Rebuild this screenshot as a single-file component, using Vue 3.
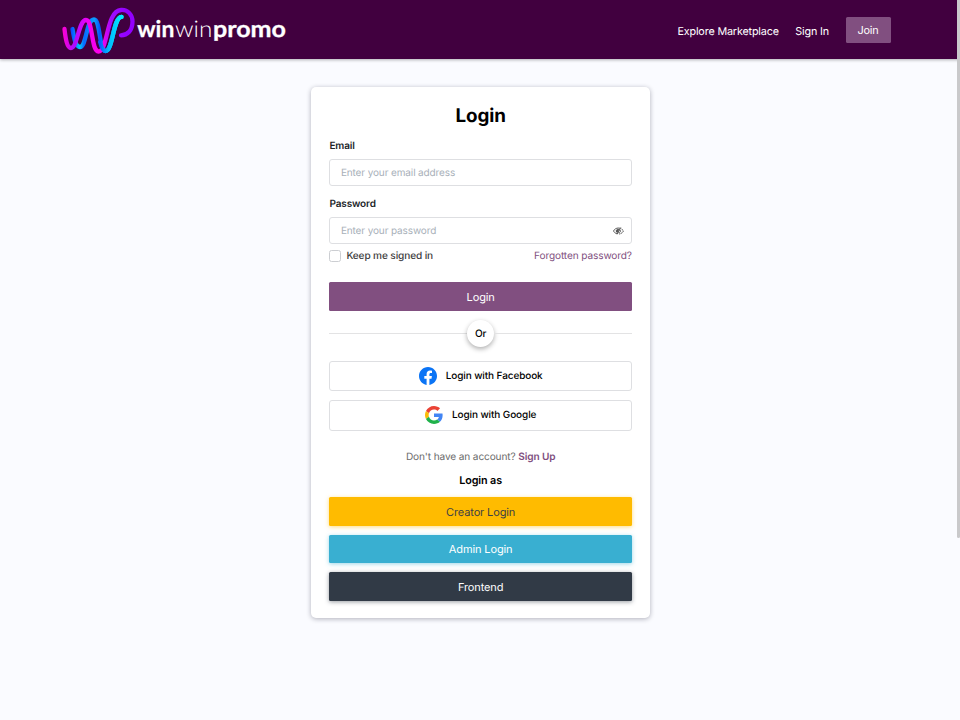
<script setup>
import { ref } from 'vue'

const email = ref('')
const password = ref('')
const keep = ref(false)
const roles = [
  { label: 'Creator Login', tone: 'creator' },
  { label: 'Admin Login', tone: 'admin' },
  { label: 'Frontend', tone: 'frontend' },
]
</script>

<template>
  <div class="page">
    <header class="header">
      <svg class="logo" viewBox="0 0 226 50" role="img" aria-label="winwinpromo">
        <defs>
          <linearGradient id="pink" gradientUnits="userSpaceOnUse" x1="2" y1="0" x2="66" y2="0">
            <stop offset="0" stop-color="#ff00d4" />
            <stop offset=".18" stop-color="#a80cff" />
            <stop offset=".38" stop-color="#f000f5" />
            <stop offset=".6" stop-color="#ff00e6" />
            <stop offset=".75" stop-color="#a00cff" />
            <stop offset="1" stop-color="#9200ff" />
          </linearGradient>
          <linearGradient id="blue" gradientUnits="userSpaceOnUse" x1="10" y1="0" x2="62" y2="0">
            <stop offset="0" stop-color="#0848ff" />
            <stop offset=".17" stop-color="#00c8ff" />
            <stop offset=".25" stop-color="#0868ff" />
            <stop offset=".45" stop-color="#0ba0ff" />
            <stop offset=".55" stop-color="#0757ff" />
            <stop offset=".72" stop-color="#00b9ff" />
            <stop offset="1" stop-color="#00f0ff" />
          </linearGradient>
        </defs>
        <g fill="none" stroke-width="4.300" stroke-linecap="round">
          <path stroke="url(#blue)" d="M11.500 24 C12.500 30 14 42 19 42 C25.500 42 25 14.500 33 14.500 C39.500 14.500 38 46 44.500 46 C52 46 52 12.300 60.500 11.800" />
          <path stroke="url(#pink)" d="M3.500 24 C4.500 33 6 43 10 43 C16.500 43 17.500 15 25 15 C32 15 30 46 37.500 46.500 C47 46.500 45 5.800 60 5 C67 4.500 71.500 10 71.500 16.500 C71.500 25.500 66.500 30.300 60 30.300" />
          <path stroke="url(#blue)" d="M39.200 37 C40.500 42.500 42 46 44.500 46 C52 46 52 12.300 60.500 11.800" />
        </g>
        <g fill="#fff" class="wordmark">
          <text x="76.300" y="32.300" textLength="37" lengthAdjust="spacingAndGlyphs" class="heavy">win</text>
          <text x="114" y="32.300" textLength="37.300" lengthAdjust="spacingAndGlyphs" class="thin">win</text>
          <text x="152" y="32.300" textLength="73" lengthAdjust="spacingAndGlyphs" class="heavy">promo</text>
        </g>
      </svg>
      <nav class="nav">
        <a>Explore Marketplace</a>
        <a>Sign In</a>
        <button class="join">Join</button>
      </nav>
    </header>

    <main class="card">
      <h1>Login</h1>
      <label class="label">Email</label>
      <div class="field"><input v-model="email" type="text" placeholder="Enter your email address" /></div>
      <label class="label second">Password</label>
      <div class="field">
        <input v-model="password" type="password" placeholder="Enter your password" />
        <svg class="eye" viewBox="0 0 22 16" fill="none" stroke="#444" stroke-width="1.700">
          <path d="M8 13.500 C4.500 12.700 2.300 10.500 1 8 C3 4 6.500 2 11 2 L14 2.400" />
          <path d="M17 4 C18.800 5 20.200 6.300 21 8 C19.300 11.500 16.300 13.600 12 14" stroke-dasharray="4 1" />
          <path d="M8.500 14.500 L15.500 1" stroke-width="2" />
          <path d="M11.500 4.500 C8 4 6.500 6 6.500 8 C6.500 9.500 7.500 10.800 8.500 11.300 Z" fill="#555" />
          <path d="M15 6.500 C15.700 8.600 14.500 10.700 12.500 11.300" />
        </svg>
      </div>
      <div class="options">
        <label class="keep"><input v-model="keep" type="checkbox" /><span>Keep me signed in</span></label>
        <a class="forgot">Forgotten password?</a>
      </div>
      <button class="btn primary">Login</button>
      <div class="divider"><span class="or">Or</span></div>
      <button class="social">
        <svg viewBox="0 0 24 24">
          <path fill="#0b74f5" d="M24 12.073C24 5.446 18.627.073 12 .073S0 5.446 0 12.073c0 5.990 4.388 10.954 10.125 11.854v-8.385H7.078v-3.470h3.047V9.430c0-3.007 1.792-4.669 4.533-4.669 1.312 0 2.686.235 2.686.235v2.953h-1.513c-1.491 0-1.956.925-1.956 1.874v2.250h3.328l-.532 3.470h-2.796v8.385C19.612 23.027 24 18.062 24 12.073z" />
        </svg>
        <span>Login with Facebook</span>
      </button>
      <button class="social google">
        <svg viewBox="0 0 48 48">
          <path fill="#ea4335" d="M24 9.500c3.540 0 6.710 1.220 9.210 3.600l6.850-6.850C35.900 2.380 30.470 0 24 0 14.620 0 6.510 5.380 2.560 13.220l7.980 6.190C12.430 13.720 17.740 9.500 24 9.500z" />
          <path fill="#4285f4" d="M46.980 24.550c0-1.570-.15-3.090-.38-4.550H24v9.020h12.940c-.58 2.960-2.260 5.480-4.780 7.180l7.730 6c4.510-4.180 7.090-10.360 7.090-17.650z" />
          <path fill="#fbbc05" d="M10.530 28.590c-.48-1.450-.76-2.990-.76-4.590s.27-3.140.76-4.590l-7.980-6.190C.92 16.460 0 20.120 0 24c0 3.880.92 7.540 2.560 10.780l7.970-6.190z" />
          <path fill="#20b24b" d="M24 48c6.480 0 11.930-2.130 15.890-5.810l-7.730-6c-2.150 1.450-4.920 2.300-8.160 2.300-6.260 0-11.570-4.220-13.470-9.910l-7.980 6.190C6.510 42.620 14.620 48 24 48z" />
        </svg>
        <span>Login with Google</span>
      </button>
      <p class="signup">Don't have an account? <a>Sign Up</a></p>
      <p class="as">Login as</p>
      <div class="roles">
        <button v-for="r in roles" :key="r.tone" class="btn" :class="r.tone">{{ r.label }}</button>
      </div>
    </main>
    <div class="scroll-thumb"></div>
  </div>
</template>

<style>
body {
  background: #fafbff;
  overflow: hidden;
}
</style>

<style scoped>
.page {
  position: relative;
  height: 720px;
  box-sizing: border-box;
  background: #fafbff;
  font-family: Inter, sans-serif;
  font-size: 10.1px;
  letter-spacing: -.12px;
  color: #000;
  text-rendering: geometricPrecision;
}
button, input {
  font-family: inherit;
  letter-spacing: inherit;
  text-rendering: inherit;
  margin: 0;
}
.header {
  height: 59.4px;
  box-sizing: border-box;
  padding: 0 69.5px 0 61px;
  display: flex;
  justify-content: space-between;
  align-items: center;
  background: #41003f;
  box-shadow: 0 1px 3px rgba(0, 0, 0, .3);
}
.logo {
  width: 226px;
  height: 50px;
}
.wordmark {
  font-family: Lato, sans-serif;
  font-size: 23px;
  letter-spacing: 0;
}
.heavy { font-weight: 700; stroke: #fff; stroke-width: .3px; }
.thin { font-weight: 300; }
.nav {
  display: flex;
  align-items: center;
  gap: 16.5px;
  color: #fff;
  font-size: 10.8px;
  letter-spacing: -.17px;
  line-height: 16px;
}
.nav a { padding-top: 4px; }
.join {
  width: 45px;
  height: 26px;
  padding: 0;
  border: 0;
  border-radius: 1.5px;
  background: #814f80;
  color: #fff;
  font-size: 10.9px;
}
.card {
  width: 338.5px;
  height: 531.5px;
  box-sizing: border-box;
  margin: 27.2px 0 0 311.4px;
  padding: 18px 18px 0;
  display: flex;
  flex-direction: column;
  background: #fff;
  border-radius: 5px;
  box-shadow: 0 1px 5px rgba(20, 20, 40, .32);
}
h1 {
  margin: 0;
  font-size: 18.8px;
  line-height: 22px;
  font-weight: 650;
  text-align: center;
}
.label {
  margin-top: 12.4px;
  height: 14px;
  line-height: 14px;
  font-size: 10px;
  font-weight: 600;
  color: #212529;
}
.label.second { margin-top: 11px; }
.field {
  margin-top: 5.6px;
  height: 27.5px;
  flex-shrink: 0;
  box-sizing: border-box;
  padding: 1px 7px 0 10.5px;
  display: flex;
  align-items: center;
  border: 1px solid #dedfe2;
  border-radius: 3px;
}
.field input {
  flex: 1;
  min-width: 0;
  padding: 0;
  border: 0;
  outline: 0;
  background: none;
  font-size: 10px;
}
.field input::placeholder { color: #a8b0b9; opacity: 1; }
.eye {
  width: 11px;
  height: 8px;
}
.options {
  height: 14px;
  margin-top: 4.7px;
  display: flex;
  justify-content: space-between;
  align-items: center;
}
.keep {
  display: flex;
  align-items: center;
  gap: 5px;
  font-weight: 500;
  color: #3c3c3c;
}
.keep input {
  appearance: none;
  width: 12px;
  height: 12px;
  border: 1px solid #ccced2;
  border-radius: 2.5px;
  background: #fff;
}
.forgot { color: #814f80; }
.btn {
  width: 100%;
  height: 28.5px;
  flex-shrink: 0;
  padding: 1px 0 0;
  border: 0;
  border-radius: 1.5px;
  font-size: 11px;
  color: #fff;
}
.primary {
  margin-top: 19.3px;
  background: #814f80;
}
.divider {
  height: 28px;
  margin-top: 8.8px;
  flex-shrink: 0;
  display: flex;
  align-items: center;
  justify-content: center;
}
.divider::before, .divider::after {
  content: "";
  flex: 1;
  height: 1.5px;
  background: #e3e3e4;
}
.or {
  width: 27px;
  height: 27px;
  box-sizing: border-box;
  padding-top: 1px;
  border-radius: 50%;
  display: flex;
  align-items: center;
  justify-content: center;
  background: #fff;
  box-shadow: 0 2px 5px rgba(0, 0, 0, .32);
  font-weight: 550;
}
.social {
  height: 30.5px;
  flex-shrink: 0;
  margin-top: 13.5px;
  padding: 0 0 1px;
  display: flex;
  align-items: center;
  justify-content: center;
  gap: 9px;
  border: 1px solid #dedfe2;
  border-radius: 3px;
  background: #fff;
  color: #000;
  font-size: 10px;
  letter-spacing: -.1px;
  font-weight: 500;
}
.social svg { width: 18px; height: 18px; }
.google {
  margin-top: 9px;
}
.signup {
  margin: 19.2px 0 0;
  line-height: 14px;
  text-align: center;
  color: #6c6c6c;
}
.signup a { color: #814f80; font-weight: 600; }
.as {
  margin: 10px 0 0;
  line-height: 14px;
  text-align: center;
  font-size: 10.8px;
  font-weight: 600;
}
.roles {
  margin-top: 9px;
  display: flex;
  flex-direction: column;
  gap: 9px;
}
.creator { background: #ffbb00; color: #3d4145; box-shadow: 0 1px 4px rgba(255, 187, 0, .5); }
.admin { background: #39afd1; box-shadow: 0 1px 4px rgba(57, 175, 209, .5); }
.frontend { background: #313a46; box-shadow: 0 1px 4px rgba(49, 58, 70, .5); }
.scroll-thumb {
  position: absolute;
  top: 0;
  right: 0;
  width: 3px;
  height: 538px;
  background: #c9c9cb;
  border-radius: 0 0 2px 2px;
}
</style>
